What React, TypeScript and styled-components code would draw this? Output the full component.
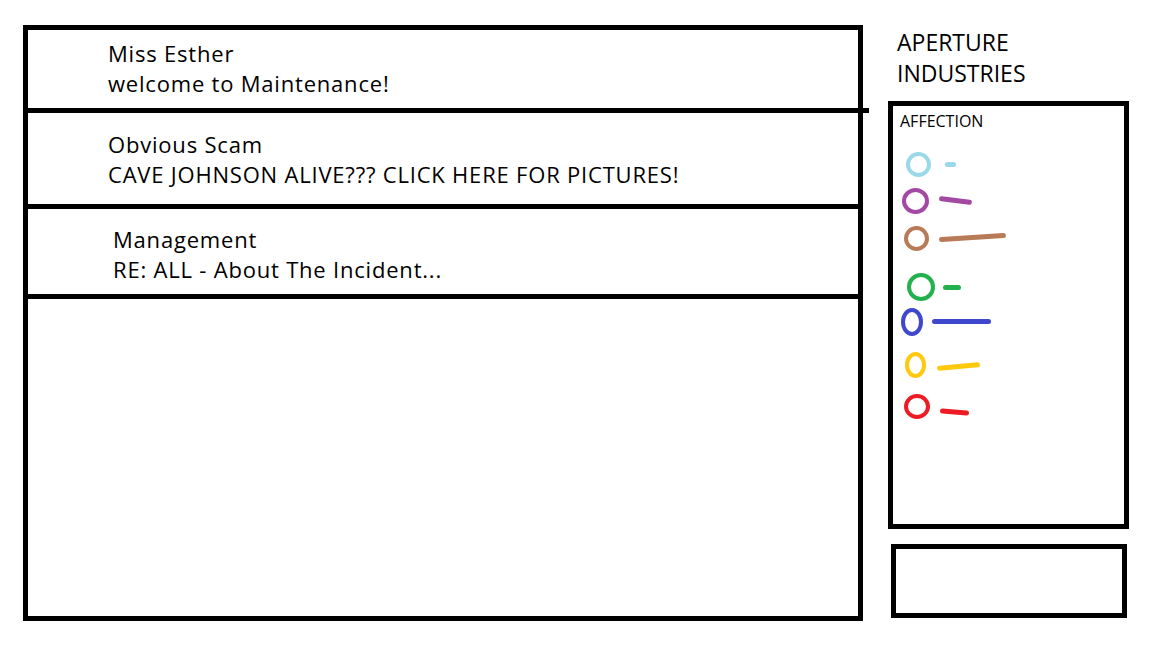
import React from 'react';
import styled, { createGlobalStyle } from 'styled-components';

const messages = [
  { from: 'Miss Esther', subject: 'welcome to Maintenance!', height: 83, padTop: 8, padLeft: 80, overshoot: true },
  { from: 'Obvious Scam', subject: 'CAVE JOHNSON ALIVE??? CLICK HERE FOR PICTURES!', height: 96, padTop: 16, padLeft: 80, overshoot: false },
  { from: 'Management', subject: 'RE: ALL - About The Incident...', height: 90, padTop: 15, padLeft: 85, overshoot: false },
];

// hand drawn affection meters: ring + bar per character
const meters = [
  { color: '#99d9ea', mt: 19, x: 13, w: 25, h: 25, gap: 14, len: 11, tilt: 0, dy: 0 },
  { color: '#a349a4', mt: 9, x: 9, w: 27, h: 26, gap: 10, len: 33, tilt: 7, dy: -1 },
  { color: '#b97a57', mt: 9.5, x: 11, w: 25, h: 25, gap: 10, len: 67, tilt: -3.7, dy: -1 },
  { color: '#22b14c', mt: 20, x: 14, w: 28, h: 28, gap: 8, len: 18, tilt: 0, dy: 1 },
  { color: '#3f48cc', mt: 7.5, x: 8, w: 22, h: 28, gap: 9, len: 59, tilt: 0, dy: -1 },
  { color: '#ffc90e', mt: 15, x: 12, w: 21, h: 26, gap: 11, len: 43, tilt: -5, dy: 1 },
  { color: '#ed1c24', mt: 13.5, x: 11, w: 26, h: 25, gap: 10, len: 29, tilt: 4.5, dy: 5.5 },
];

export default function App() {
  return (
    <>
      <GlobalStyle />
      <Page>
        <Inbox>
          {messages.map((m) => (
            <MessageRow
              key={m.from}
              $height={m.height}
              $padTop={m.padTop}
              $padLeft={m.padLeft}
              $overshoot={m.overshoot}
            >
              <MessageLine>{m.from}</MessageLine>
              <MessageLine>{m.subject}</MessageLine>
            </MessageRow>
          ))}
        </Inbox>
        <Sidebar>
          <Brand>
            APERTURE
            <br />
            INDUSTRIES
          </Brand>
          <AffectionPanel>
            <PanelLabel>AFFECTION</PanelLabel>
            {meters.map((m) => (
              <MeterRow key={m.color} $mt={m.mt} $x={m.x}>
                <Ring $color={m.color} $w={m.w} $h={m.h} />
                <Bar $color={m.color} $gap={m.gap} $len={m.len} $tilt={m.tilt} $dy={m.dy} />
              </MeterRow>
            ))}
          </AffectionPanel>
          <StatusBox />
        </Sidebar>
      </Page>
    </>
  );
}

const GlobalStyle = createGlobalStyle`
  html, body {
    margin: 0;
    background: #ffffff;
  }
  body {
    font-family: "Open Sans", "Noto Sans", sans-serif;
    color: #000000;
  }
`;

const Page = styled.div`
  display: flex;
  align-items: flex-start;
  gap: 25px;
  padding: 25px 0 0 23px;
  width: 1152px;
  height: 648px;
  box-sizing: border-box;
`;

const Inbox = styled.div`
  width: 840px;
  height: 596px;
  border: 5px solid #000;
  box-sizing: border-box;
  display: flex;
  flex-direction: column;
`;

const MessageRow = styled.div<{ $height: number; $padTop: number; $padLeft: number; $overshoot: boolean }>`
  position: relative;
  flex: none;
  height: ${(p) => p.$height}px;
  padding: ${(p) => p.$padTop}px 0 0 ${(p) => p.$padLeft}px;
  border-bottom: 5px solid #000;
  box-sizing: border-box;
  &::after {
    content: '';
    display: ${(p) => (p.$overshoot ? 'block' : 'none')};
    position: absolute;
    right: -11px;
    bottom: -5px;
    width: 11px;
    height: 5px;
    background: #000;
  }
`;

const MessageLine = styled.div`
  font-size: 22px;
  line-height: 30px;
  letter-spacing: 0.8px;
  white-space: nowrap;
`;

const Sidebar = styled.div`
  width: 241px;
  display: flex;
  flex-direction: column;
`;

const Brand = styled.div`
  margin: 2px 0 0 9px;
  font-size: 23px;
  line-height: 31px;
`;

const AffectionPanel = styled.div`
  margin-top: 12px;
  width: 241px;
  height: 428px;
  border: 5px solid #000;
  box-sizing: border-box;
  padding: 5px 0 0 7px;
  display: flex;
  flex-direction: column;
`;

const PanelLabel = styled.div`
  font-size: 16px;
  line-height: 20px;
`;

const MeterRow = styled.div<{ $mt: number; $x: number }>`
  display: flex;
  align-items: center;
  height: 28px;
  margin-top: ${(p) => p.$mt}px;
  margin-left: ${(p) => p.$x - 7}px;
`;

const Ring = styled.span<{ $color: string; $w: number; $h: number }>`
  width: ${(p) => p.$w}px;
  height: ${(p) => p.$h}px;
  border: 4px solid ${(p) => p.$color};
  border-radius: 50%;
  box-sizing: border-box;
  flex: none;
`;

const Bar = styled.span<{ $color: string; $gap: number; $len: number; $tilt: number; $dy: number }>`
  margin-left: ${(p) => p.$gap}px;
  width: ${(p) => p.$len}px;
  height: 5px;
  border-radius: 3px;
  background: ${(p) => p.$color};
  transform: translateY(${(p) => p.$dy}px) rotate(${(p) => p.$tilt}deg);
  flex: none;
`;

const StatusBox = styled.div`
  margin: 15px 0 0 3px;
  width: 236px;
  height: 74px;
  border: 5px solid #000;
  box-sizing: border-box;
`;
